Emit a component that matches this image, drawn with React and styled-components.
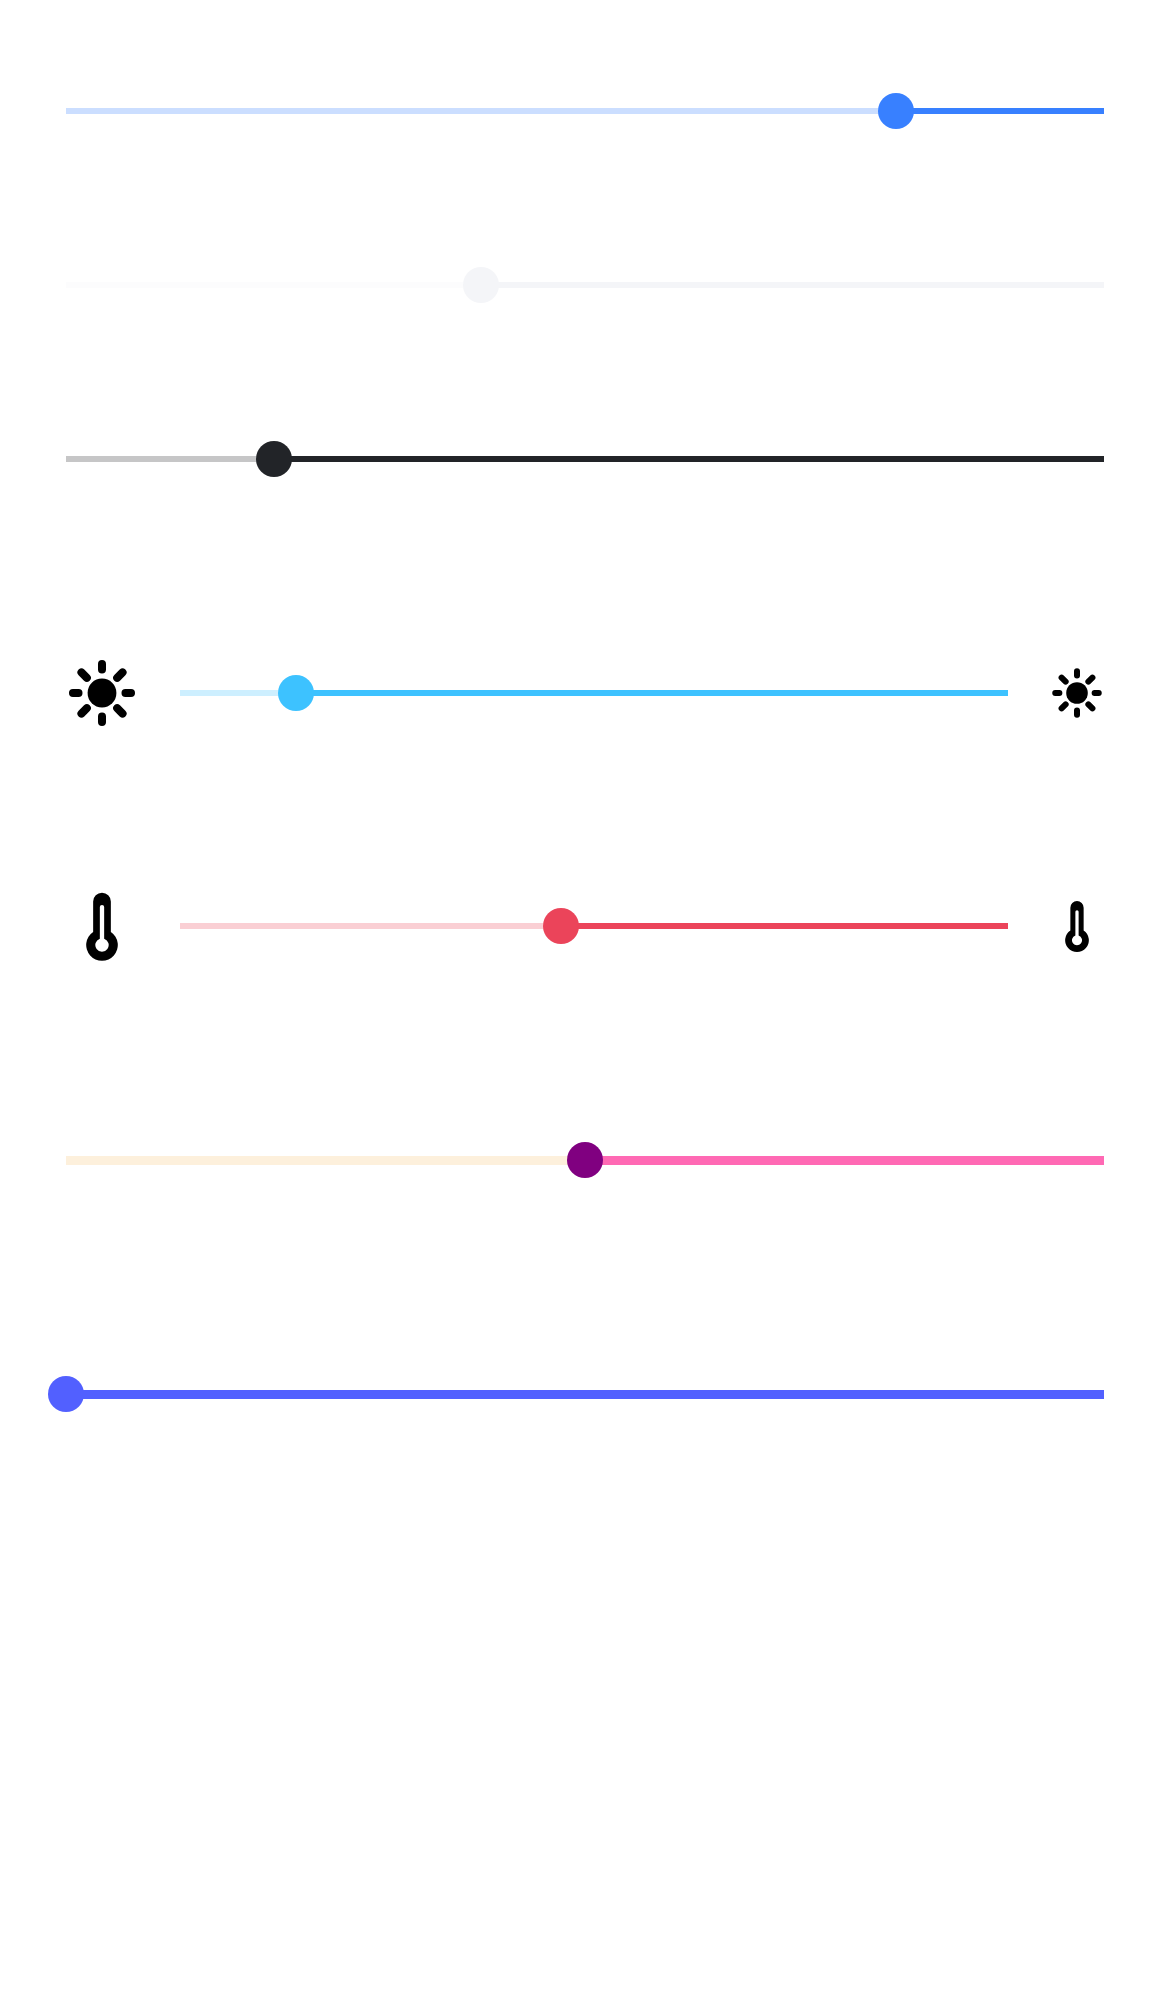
import React from "react";
import styled, { createGlobalStyle } from "styled-components";

const GlobalStyle = createGlobalStyle`
  html, body {
    margin: 0;
    padding: 0;
    background: #fff;
  }
`;

const Page = styled.div`
  width: 1170px;
  height: 1992px;
  box-sizing: border-box;
  padding: 93px 66px 0;
  display: flex;
  flex-direction: column;
`;

const Row = styled.div`
  display: flex;
  align-items: center;
  height: ${props => (props.$icons ? "72px" : "36px")};
  margin-bottom: ${props => props.$gap}px;
`;

const Track = styled.div`
  position: relative;
  flex: 1;
  height: ${props => props.$thick}px;
  background: ${props => props.$color};
  margin: ${props => (props.$icons ? "0 42px" : "0")};
`;

const Bar = styled.div`
  height: 100%;
  background: ${props => props.$color};
`;

const Knob = styled.div`
  position: absolute;
  top: 50%;
  width: 36px;
  height: 36px;
  border-radius: 50%;
  background: ${props => props.$color};
  transform: translate(-50%, -50%);
`;

const IconBox = styled.svg`
  flex: none;
  display: block;
  fill: #000;
`;

const SunIcon = ({ size }) => (
  <IconBox width={size} height={size} viewBox="0 0 24 24">
    <circle cx="12" cy="12" r="4.8" />
    <path
      d="M12 2.33v1.84M12 19.83v1.84M2.33 12h1.84M19.83 12h1.84M5.15 5.15l1.8 1.8M17.05 17.05l1.8 1.8M5.15 18.85l1.8-1.8M17.05 6.95l1.8-1.8"
      fill="none"
      stroke="#000"
      strokeWidth="2.67"
      strokeLinecap="round"
    />
  </IconBox>
);

const ThermometerIcon = ({ size }) => (
  <IconBox width={size} height={size} viewBox="0 0 24 24">
    <path
      fillRule="evenodd"
      d="M9.05 13.96V3.85a2.95 2.95 0 0 1 5.9 0V13.96A5.27 5.27 0 1 1 9.05 13.96ZM11.28 16.22V5.7a.72 .72 0 0 1 1.44 0V16.22A2.23 2.23 0 1 1 11.28 16.22Z"
    />
  </IconBox>
);

const sliders = [
  { value: 80, bar: "rgba(56, 128, 255, 0.26)", active: "#3880ff", knob: "#3880ff", thick: 6, gap: 138 },
  { value: 40, bar: "rgba(244, 245, 248, 0.26)", active: "#f4f5f8", knob: "#f4f5f8", thick: 6, gap: 138 },
  { value: 20, bar: "rgba(34, 36, 40, 0.26)", active: "#222428", knob: "#222428", thick: 6, gap: 180 },
  { value: 14, bar: "rgba(61, 194, 255, 0.26)", active: "#3dc2ff", knob: "#3dc2ff", thick: 6, gap: 161, Icon: SunIcon },
  { value: 46, bar: "rgba(235, 68, 90, 0.26)", active: "#eb445a", knob: "#eb445a", thick: 6, gap: 180, Icon: ThermometerIcon },
  { value: 50, bar: "#fdf0dc", active: "#ff69b4", knob: "#800080", thick: 9, gap: 198 },
  { value: 0, bar: "rgba(82, 96, 255, 0.26)", active: "#5260ff", knob: "#5260ff", thick: 9, gap: 0 },
];

const Slider = ({ item }) => {
  const Icon = item.Icon;
  return (
    <Row $icons={!!Icon} $gap={item.gap}>
      {Icon && <Icon size={72} />}
      <Track $icons={!!Icon} $thick={item.thick} $color={item.bar}>
        <Bar
          $color={item.active}
          style={{ marginLeft: `${item.value}%`, width: `${100 - item.value}%` }}
        />
        <Knob $color={item.knob} style={{ left: `${item.value}%` }} />
      </Track>
      {Icon && <Icon size={54} />}
    </Row>
  );
};

const App = () => (
  <Page>
    <GlobalStyle />
    {sliders.map(item => (
      <Slider item={item} key={item.knob + item.value} />
    ))}
  </Page>
);

export default App;
